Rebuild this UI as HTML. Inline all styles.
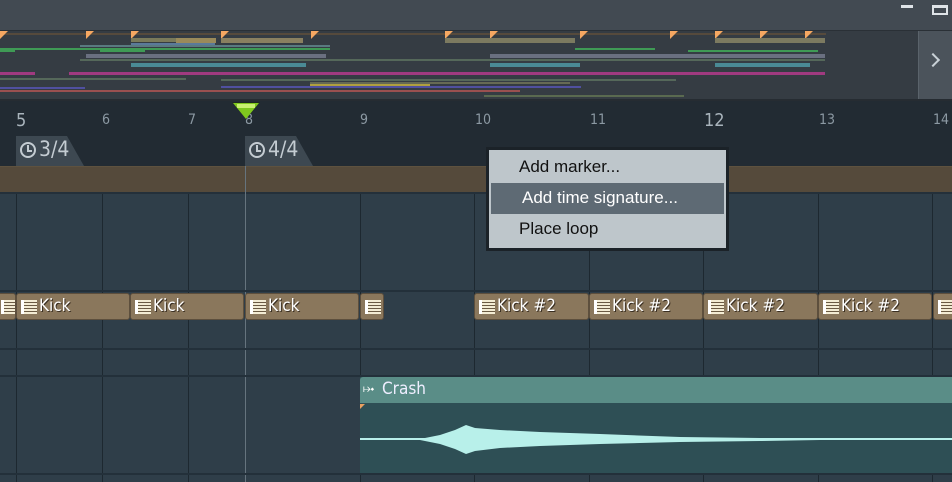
<!DOCTYPE html>
<html><head><meta charset="utf-8"><style>
*{margin:0;padding:0;box-sizing:border-box}
body{width:952px;height:482px;overflow:hidden;background:#2f3e49;position:relative;font-family:"DejaVu Sans Condensed","Liberation Sans Narrow","Liberation Sans",sans-serif}
.a{position:absolute}
.num{position:absolute;top:112px;color:#8c99a3;font-size:14px}
.big{font-size:18px;color:#a9b4bc;top:110px}
.vl{position:absolute;top:194px;bottom:0;width:1px;background:#1d2830}
.hl{position:absolute;left:0;right:0;height:2px;background:#23303a}
.clip{position:absolute;top:293px;height:27px;background:#8a775c;border:1px solid #5d4f3d;border-radius:3px;color:#fff;font-size:17px;line-height:24px;padding-left:22px;text-shadow:1px 1px 0 #3a2f22;white-space:nowrap;overflow:hidden}
.clip:before{content:"";position:absolute;left:4px;top:6px;width:13px;height:14px;background:repeating-linear-gradient(#f3ecd4 0 2px,#6a5a44 2px 3px);border-left:3px solid #fff}
.ol{position:absolute;height:2px}
.fl{position:absolute;top:31px;width:0;height:0;border-top:8px solid #f6a862;border-right:8px solid transparent}
.menu{font-family:"Liberation Sans","DejaVu Sans",sans-serif;font-size:17px;color:#111}
</style></head><body>
<div class="a" style="left:0;top:0;width:952px;height:30px;background:#424a52"></div>
<div class="a" style="left:901px;top:5px;width:12px;height:3px;background:#dfe4e8"></div>
<div class="a" style="left:932px;top:5px;width:16px;height:10px;border:2px solid #dfe4e8;border-top-width:3px"></div>
<div class="a" style="left:0;top:30px;width:952px;height:71px;background:#353c43;border-top:1px solid #2a3036;border-bottom:2px solid #262c32"></div>
<div class="ol" style="left:0;top:33px;width:826px;background:#564a3c"></div>
<div class="fl" style="left:0"></div><div class="fl" style="left:86px"></div><div class="fl" style="left:131px"></div><div class="fl" style="left:221px"></div><div class="fl" style="left:311px"></div><div class="fl" style="left:445px"></div><div class="fl" style="left:490px"></div><div class="fl" style="left:580px"></div><div class="fl" style="left:670px"></div><div class="fl" style="left:715px"></div><div class="fl" style="left:760px"></div><div class="fl" style="left:805px"></div>
<div class="ol" style="left:131px;top:38px;width:84px;height:4px;background:#7a7a5a"></div>
<div class="ol" style="left:176px;top:38px;width:40px;height:5px;background:#9a8a5a"></div>
<div class="ol" style="left:221px;top:38px;width:82px;height:5px;background:#8a8060"></div>
<div class="ol" style="left:445px;top:38px;width:130px;height:5px;background:#7c7a60"></div>
<div class="ol" style="left:715px;top:38px;width:110px;height:5px;background:#7c7a60"></div>
<div class="ol" style="left:131px;top:43px;width:84px;background:#5a7a9a"></div>
<div class="ol" style="left:80px;top:45px;width:250px;background:#5a7a80"></div>
<div class="ol" style="left:0;top:48px;width:330px;background:#3f9a55"></div>
<div class="ol" style="left:0;top:50px;width:15px;background:#3f9a55"></div>
<div class="ol" style="left:100px;top:50px;width:45px;background:#3f9a55"></div>
<div class="ol" style="left:575px;top:48px;width:80px;background:#3f9a55"></div>
<div class="ol" style="left:688px;top:50px;width:130px;background:#3f9a55"></div>
<div class="ol" style="left:86px;top:54px;width:240px;height:4px;background:#6a7080"></div>
<div class="ol" style="left:490px;top:54px;width:335px;height:4px;background:#6a7080"></div>
<div class="ol" style="left:80px;top:59px;width:745px;background:#55685a"></div>
<div class="ol" style="left:131px;top:63px;width:175px;height:4px;background:#4a8a95"></div>
<div class="ol" style="left:490px;top:63px;width:90px;height:4px;background:#4a8a95"></div>
<div class="ol" style="left:715px;top:63px;width:95px;height:4px;background:#4a8a95"></div>
<div class="ol" style="left:0;top:72px;width:35px;height:3px;background:#a03a80"></div>
<div class="ol" style="left:69px;top:72px;width:756px;height:3px;background:#a03a80"></div>
<div class="ol" style="left:0;top:78px;width:186px;background:#55685a"></div>
<div class="ol" style="left:221px;top:79px;width:455px;background:#55685a"></div>
<div class="ol" style="left:310px;top:82px;width:260px;background:#666a55"></div>
<div class="ol" style="left:0;top:87px;width:85px;background:#5050a0"></div>
<div class="ol" style="left:221px;top:86px;width:360px;background:#5050a0"></div>
<div class="ol" style="left:310px;top:84px;width:120px;background:#b0a040"></div>
<div class="ol" style="left:0;top:90px;width:520px;background:#9a5050"></div>
<div class="ol" style="left:484px;top:95px;width:200px;background:#5a6a50"></div>
<div class="a" style="left:918px;top:31px;width:34px;height:68px;background:#4b535b;border-left:1px solid #5a636b"></div>
<div class="a" style="left:928px;top:55px;width:10px;height:10px;border-right:2px solid #c8d0d6;border-top:2px solid #c8d0d6;transform:rotate(45deg)"></div>
<div class="a" style="left:0;top:101px;width:952px;height:65px;background:#222b33"></div>
<div class="num big" style="left:16px">5</div>
<div class="num" style="left:102px">6</div>
<div class="num" style="left:188px">7</div>
<div class="num" style="left:245px">8</div>
<div class="num" style="left:360px">9</div>
<div class="num" style="left:475px">10</div>
<div class="num" style="left:590px">11</div>
<div class="num big" style="left:704px">12</div>
<div class="num" style="left:819px">13</div>
<div class="num" style="left:933px">14</div>
<div class="a" style="left:232px;top:102px;width:0;height:0;border-left:14px solid transparent;border-right:14px solid transparent;border-top:17px solid #1e2a20"></div>
<div class="a" style="left:233px;top:103px;width:0;height:0;border-left:13px solid transparent;border-right:13px solid transparent;border-top:16px solid #7fc81e"></div>
<div class="a" style="left:237px;top:104px;width:18px;height:4px;background:#c8f070"></div>
<div class="a" style="left:16px;top:136px;width:68px;height:30px;background:#3d4851;clip-path:polygon(0 0,75% 0,100% 100%,0 100%)"></div>
<div class="a" style="left:245px;top:136px;width:68px;height:30px;background:#3d4851;clip-path:polygon(0 0,75% 0,100% 100%,0 100%)"></div>
<div class="a" style="left:20px;top:142px;width:16px;height:16px;border:2px solid #c4ccd2;border-radius:50%"></div>
<div class="a" style="left:27px;top:145px;width:2px;height:7px;background:#c4ccd2"></div><div class="a" style="left:27px;top:150px;width:5px;height:2px;background:#c4ccd2"></div>
<div class="a" style="left:249px;top:142px;width:16px;height:16px;border:2px solid #c4ccd2;border-radius:50%"></div>
<div class="a" style="left:256px;top:145px;width:2px;height:7px;background:#c4ccd2"></div><div class="a" style="left:256px;top:150px;width:5px;height:2px;background:#c4ccd2"></div>
<div class="a" style="left:39px;top:137px;color:#c4ccd2;font-size:21px">3/4</div>
<div class="a" style="left:268px;top:137px;color:#c4ccd2;font-size:21px">4/4</div>
<div class="a" style="left:0;top:166px;width:952px;height:28px;background:#554a3b;border-top:1px solid #5e523f;border-bottom:2px solid #24303a"></div>
<div class="vl" style="left:16px"></div><div class="vl" style="left:102px"></div><div class="vl" style="left:188px"></div>
<div class="vl" style="left:245px;top:166px;background:#66747e"></div>
<div class="vl" style="left:360px"></div><div class="vl" style="left:474px"></div><div class="vl" style="left:589px"></div><div class="vl" style="left:703px"></div><div class="vl" style="left:818px"></div><div class="vl" style="left:932px"></div>
<div class="hl" style="top:290px"></div><div class="hl" style="top:348px"></div><div class="hl" style="top:375px"></div><div class="hl" style="top:473px"></div>
<div class="clip" style="left:-4px;width:20px;padding:0"></div>
<div class="clip" style="left:16px;width:114px">Kick</div>
<div class="clip" style="left:130px;width:114px">Kick</div>
<div class="clip" style="left:245px;width:114px">Kick</div>
<div class="clip" style="left:360px;width:23px"></div>
<div class="clip" style="left:474px;width:115px">Kick #2</div>
<div class="clip" style="left:589px;width:114px">Kick #2</div>
<div class="clip" style="left:703px;width:115px">Kick #2</div>
<div class="clip" style="left:818px;width:114px">Kick #2</div>
<div class="clip" style="left:933px;width:30px"></div>
<div class="a" style="left:360px;top:377px;width:592px;height:96px;background:#2e4f55"></div>
<div class="a" style="left:360px;top:377px;width:592px;height:26px;background:#5a8d87;border-radius:3px 0 0 0"></div>
<div class="a" style="left:382px;top:379px;color:#eef;font-size:17px">Crash</div>
<div class="a" style="left:363px;top:381px;color:#fff;font-size:14px">⤠</div>
<div class="a" style="left:360px;top:404px;width:0;height:0;border-top:5px solid #e8a060;border-right:5px solid transparent"></div>
<div class="a" style="left:360px;top:438px;width:592px;height:2px;background:#b8f0ea"></div>
<svg class="a" style="left:360px;top:420px" width="460" height="40"><path d="M60 19 L80 15 L95 10 L106 5 L115 8 L140 10 L180 12 L240 14 L320 17 L400 18 L460 19 L460 20 L400 21 L320 22 L240 24 L180 26 L140 28 L115 31 L106 34 L95 29 L80 24 L60 20Z" fill="#b8f0ea"/></svg>
<div class="a menu" style="left:486px;top:147px;width:243px;height:104px;background:#bec6cb;border:3px solid #1b2228">
<div class="a" style="left:30px;top:7px">Add marker...</div>
<div class="a" style="left:2px;top:33px;width:233px;height:31px;background:#5e6a74"></div>
<div class="a" style="left:33px;top:38px;color:#fff">Add time signature...</div>
<div class="a" style="left:30px;top:69px">Place loop</div>
</div>
</body></html>
